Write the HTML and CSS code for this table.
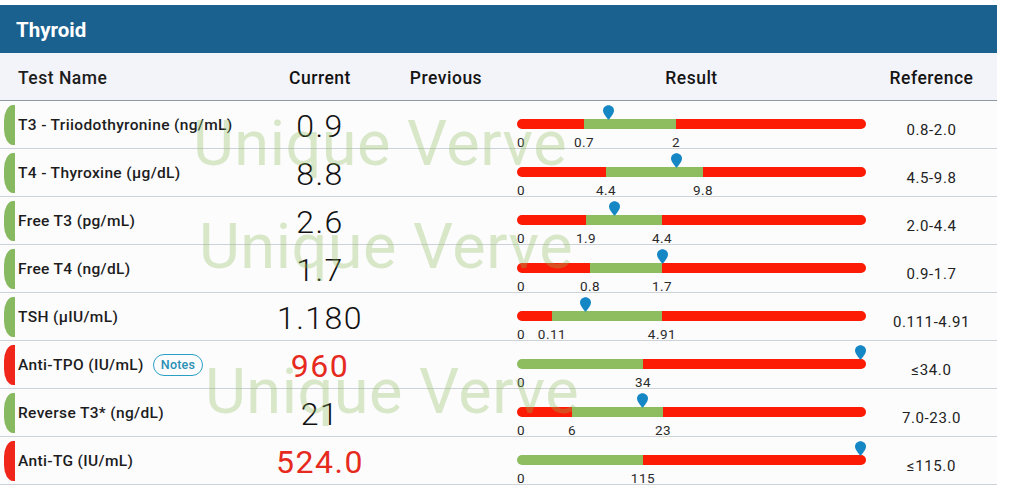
FILE: index.html
```html
<!DOCTYPE html>
<html>
<head>
<meta charset="utf-8">
<link rel="stylesheet" href="styles.css">
</head>
<body>
<div class="panel">
  <div class="title">Thyroid</div>
  <div class="row thead">
    <div class="name">Test Name</div>
    <div class="cur">Current</div>
    <div class="prev">Previous</div>
    <div class="res">Result</div>
    <div class="ref">Reference</div>
  </div>

  <div class="row">
    <div class="name"><span class="ind ok"></span>T3 - Triiodothyronine (ng/mL)</div>
    <div class="cur">0.9</div>
    <div class="prev"></div>
    <div class="res">
      <div class="bar"><span class="seg red" style="width:67px"></span><span class="seg green" style="width:92px"></span><span class="seg red fill"></span></div>
      <span class="tick zero">0</span><span class="tick" style="left:67px">0.7</span><span class="tick" style="left:159px">2</span>
      <svg class="pin" style="left:91px" viewBox="0 0 12 16"><path d="M6 0C2.7 0 0 2.6 0 5.8 0 9.6 6 16 6 16s6-6.4 6-10.2C12 2.6 9.3 0 6 0z"/></svg>
    </div>
    <div class="ref">0.8-2.0</div>
  </div>

  <div class="row">
    <div class="name"><span class="ind ok"></span>T4 - Thyroxine (µg/dL)</div>
    <div class="cur">8.8</div>
    <div class="prev"></div>
    <div class="res">
      <div class="bar"><span class="seg red" style="width:89px"></span><span class="seg green" style="width:97px"></span><span class="seg red fill"></span></div>
      <span class="tick zero">0</span><span class="tick" style="left:89px">4.4</span><span class="tick" style="left:186px">9.8</span>
      <svg class="pin" style="left:159px" viewBox="0 0 12 16"><path d="M6 0C2.7 0 0 2.6 0 5.8 0 9.6 6 16 6 16s6-6.4 6-10.2C12 2.6 9.3 0 6 0z"/></svg>
    </div>
    <div class="ref">4.5-9.8</div>
  </div>

  <div class="row">
    <div class="name"><span class="ind ok"></span>Free T3 (pg/mL)</div>
    <div class="cur">2.6</div>
    <div class="prev"></div>
    <div class="res">
      <div class="bar"><span class="seg red" style="width:69px"></span><span class="seg green" style="width:76px"></span><span class="seg red fill"></span></div>
      <span class="tick zero">0</span><span class="tick" style="left:69px">1.9</span><span class="tick" style="left:145px">4.4</span>
      <svg class="pin" style="left:97px" viewBox="0 0 12 16"><path d="M6 0C2.7 0 0 2.6 0 5.8 0 9.6 6 16 6 16s6-6.4 6-10.2C12 2.6 9.3 0 6 0z"/></svg>
    </div>
    <div class="ref">2.0-4.4</div>
  </div>

  <div class="row">
    <div class="name"><span class="ind ok"></span>Free T4 (ng/dL)</div>
    <div class="cur">1.7</div>
    <div class="prev"></div>
    <div class="res">
      <div class="bar"><span class="seg red" style="width:73px"></span><span class="seg green" style="width:72px"></span><span class="seg red fill"></span></div>
      <span class="tick zero">0</span><span class="tick" style="left:73px">0.8</span><span class="tick" style="left:145px">1.7</span>
      <svg class="pin" style="left:145px" viewBox="0 0 12 16"><path d="M6 0C2.7 0 0 2.6 0 5.8 0 9.6 6 16 6 16s6-6.4 6-10.2C12 2.6 9.3 0 6 0z"/></svg>
    </div>
    <div class="ref">0.9-1.7</div>
  </div>

  <div class="row">
    <div class="name"><span class="ind ok"></span>TSH (µIU/mL)</div>
    <div class="cur">1.180</div>
    <div class="prev"></div>
    <div class="res">
      <div class="bar"><span class="seg red" style="width:35px"></span><span class="seg green" style="width:110px"></span><span class="seg red fill"></span></div>
      <span class="tick zero">0</span><span class="tick" style="left:35px">0.11</span><span class="tick" style="left:145px">4.91</span>
      <svg class="pin" style="left:68px" viewBox="0 0 12 16"><path d="M6 0C2.7 0 0 2.6 0 5.8 0 9.6 6 16 6 16s6-6.4 6-10.2C12 2.6 9.3 0 6 0z"/></svg>
    </div>
    <div class="ref">0.111-4.91</div>
  </div>

  <div class="row">
    <div class="name"><span class="ind bad"></span>Anti-TPO (IU/mL)<span class="notes">Notes</span></div>
    <div class="cur high">960</div>
    <div class="prev"></div>
    <div class="res">
      <div class="bar"><span class="seg green" style="width:126px"></span><span class="seg red fill"></span></div>
      <span class="tick zero">0</span><span class="tick" style="left:126px">34</span>
      <svg class="pin" style="left:343px" viewBox="0 0 12 16"><path d="M6 0C2.7 0 0 2.6 0 5.8 0 9.6 6 16 6 16s6-6.4 6-10.2C12 2.6 9.3 0 6 0z"/></svg>
    </div>
    <div class="ref">≤34.0</div>
  </div>

  <div class="row">
    <div class="name"><span class="ind ok"></span>Reverse T3* (ng/dL)</div>
    <div class="cur">21</div>
    <div class="prev"></div>
    <div class="res">
      <div class="bar"><span class="seg red" style="width:55px"></span><span class="seg green" style="width:91px"></span><span class="seg red fill"></span></div>
      <span class="tick zero">0</span><span class="tick" style="left:55px">6</span><span class="tick" style="left:146px">23</span>
      <svg class="pin" style="left:125px" viewBox="0 0 12 16"><path d="M6 0C2.7 0 0 2.6 0 5.8 0 9.6 6 16 6 16s6-6.4 6-10.2C12 2.6 9.3 0 6 0z"/></svg>
    </div>
    <div class="ref">7.0-23.0</div>
  </div>

  <div class="row">
    <div class="name"><span class="ind bad"></span>Anti-TG (IU/mL)</div>
    <div class="cur high">524.0</div>
    <div class="prev"></div>
    <div class="res">
      <div class="bar"><span class="seg green" style="width:126px"></span><span class="seg red fill"></span></div>
      <span class="tick zero">0</span><span class="tick" style="left:126px">115</span>
      <svg class="pin" style="left:343px" viewBox="0 0 12 16"><path d="M6 0C2.7 0 0 2.6 0 5.8 0 9.6 6 16 6 16s6-6.4 6-10.2C12 2.6 9.3 0 6 0z"/></svg>
    </div>
    <div class="ref">≤115.0</div>
  </div>

  <div class="wm wm1">Unique Verve</div>
  <div class="wm wm2">Unique Verve</div>
  <div class="wm wm3">Unique Verve</div>
</div>
</body>
</html>
```

FILE: styles.css
```css
* { box-sizing: border-box; }
html, body {
  margin: 0;
  padding: 0;
  background: #ffffff;
  font-family: Roboto, "Liberation Sans", sans-serif;
  color: #1c1c1c;
}
body {
  width: 1024px;
  height: 490px;
  overflow: hidden;
  padding-top: 5px;
}
.panel {
  position: relative;
  width: 997px;
  background: #fbfbfc;
}
.title {
  height: 48px;
  background: #1a6190;
  color: #ffffff;
  font-size: 20.5px;
  font-weight: 700;
  display: flex;
  align-items: center;
  padding-left: 16px;
  padding-top: 2px;
}
.row {
  display: grid;
  grid-template-columns: 265px 110px 142px 349px 131px;
  height: 48px;
  border-bottom: 1px solid #cdd2d9;
  background: #fcfcfd;
}
.thead {
  background: #f3f3fa;
  border-bottom: 1.5px solid #8e99a4;
  font-size: 17.5px;
  font-weight: 500;
  color: #151515;
  letter-spacing: 0.5px;
  padding-top: 3px;
}
.thead > div {
  display: flex;
  align-items: center;
  justify-content: center;
}
.thead .name {
  justify-content: flex-start;
  padding-left: 18px;
  font-size: 17.5px;
  letter-spacing: 0.5px;
}
.name {
  display: flex;
  align-items: center;
  font-size: 15.5px;
  font-weight: 500;
  letter-spacing: 0.35px;
  color: #1d1d1d;
}
.ind {
  width: 11px;
  height: 40px;
  margin-left: 4px;
  margin-right: 3px;
  border-radius: 9px 0 0 9px / 16px 0 0 16px;
  flex: none;
}
.ind.ok { background: #86b960; }
.ind.bad { background: #f0261b; }
.notes {
  margin-left: 9px;
  border: 1.5px solid #2a9fc6;
  color: #2a8fb4;
  border-radius: 12px;
  font-size: 12.5px;
  font-weight: 500;
  letter-spacing: 0.2px;
  padding: 3px 7px;
  line-height: 14px;
}
.cur {
  display: flex;
  align-items: center;
  justify-content: center;
  font-size: 32px;
  font-weight: 300;
  letter-spacing: 1.5px;
  color: #111;
  padding-top: 2px;
}
.thead .cur { font-size: 17.5px; font-weight: 500; padding-top: 0; letter-spacing: 0.5px; }
.cur.high { color: #e62a1e; font-weight: 400; }
.res {
  position: relative;
}
.bar {
  position: absolute;
  left: 0;
  right: 0;
  top: 18px;
  height: 10px;
  border-radius: 5px;
  overflow: hidden;
  display: flex;
}
.seg { display: block; height: 100%; flex: none; }
.seg.fill { flex: 1; }
.seg.red { background: #fc1b05; }
.seg.green { background: #8dbd5f; }
.tick {
  position: absolute;
  top: 33px;
  font-size: 13.5px;
  letter-spacing: 0.5px;
  color: #2a2a2a;
  transform: translateX(-50%);
  line-height: 16px;
}
.tick.zero { left: 0; transform: none; }
.pin {
  position: absolute;
  top: 4px;
  width: 11px;
  height: 15px;
  margin-left: -5.5px;
  fill: #1587c4;
}
.ref {
  display: flex;
  align-items: center;
  justify-content: center;
  font-size: 15px;
  letter-spacing: 0.6px;
  color: #222;
  padding-top: 11px;
}
.thead .ref { padding-top: 0; font-size: 17.5px; color: #151515; letter-spacing: 0.5px; }
.wm {
  position: absolute;
  font-size: 63px;
  line-height: 1;
  color: rgba(140, 188, 86, 0.32);
  white-space: nowrap;
  pointer-events: none;
  letter-spacing: 0.5px;
}
.wm1 { left: 193px; top: 107px; }
.wm2 { left: 199px; top: 210px; }
.wm3 { left: 205px; top: 355px; }
```
